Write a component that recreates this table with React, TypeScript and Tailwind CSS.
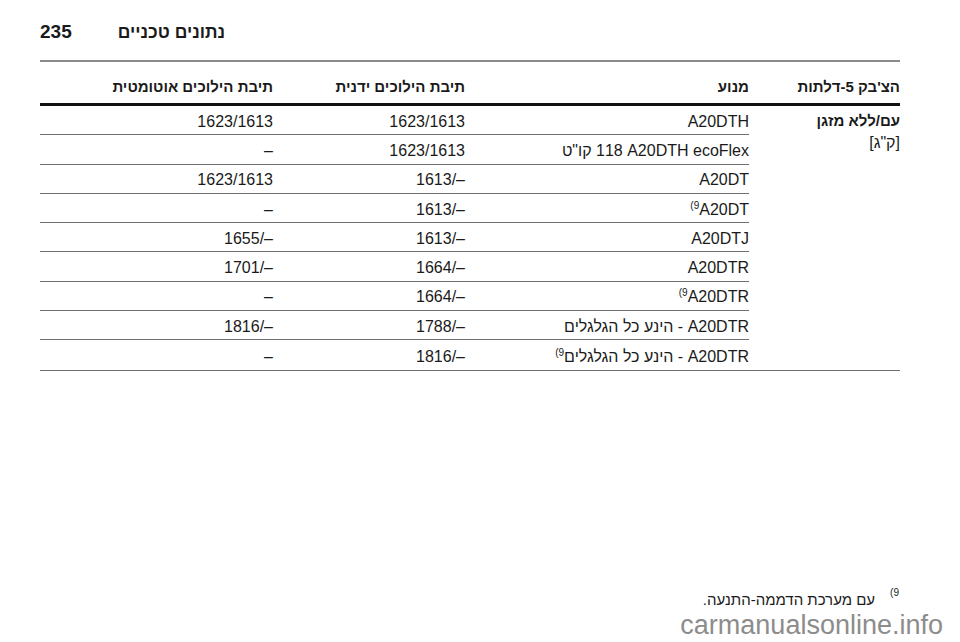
import React from "react";

type Row = {
  engine: React.ReactNode;
  manual: string;
  auto: string;
};

const Sup = ({ children }: { children: React.ReactNode }) => (
  <sup className="text-[10px] top-[-0.6em]">{children}</sup>
);

const rows: Row[] = [
  { engine: "A20DTH", manual: "1623/1613", auto: "1623/1613" },
  {
    engine: (
      <span dir="ltr">
        <span dir="rtl">קו"ט</span> 118 A20DTH ecoFlex
      </span>
    ),
    manual: "1623/1613",
    auto: "–",
  },
  { engine: "A20DT", manual: "1613/–", auto: "1623/1613" },
  {
    engine: (
      <span dir="ltr">
        <Sup>(9</Sup>A20DT
      </span>
    ),
    manual: "1613/–",
    auto: "–",
  },
  { engine: "A20DTJ", manual: "1613/–", auto: "1655/–" },
  { engine: "A20DTR", manual: "1664/–", auto: "1701/–" },
  {
    engine: (
      <span dir="ltr">
        <Sup>(9</Sup>A20DTR
      </span>
    ),
    manual: "1664/–",
    auto: "–",
  },
  { engine: "A20DTR - הינע כל הגלגלים", manual: "1788/–", auto: "1816/–" },
  {
    engine: (
      <>
        A20DTR - הינע כל הגלגלים<Sup>9)</Sup>
      </>
    ),
    manual: "1816/–",
    auto: "–",
  },
];

export default function App() {
  return (
    <div
      className="h-[642px] w-[960px] flex flex-col bg-white text-[#1a1a1a] overflow-hidden"
      style={{ fontFamily: '"Liberation Sans", Arial, sans-serif' }}
    >
      {/* page header */}
      <div className="flex items-center gap-[46px] pl-[40px] pt-[20px] h-[44px] font-bold leading-[24px]">
        <span className="text-[19px]">235</span>
        <span dir="rtl" className="text-[17.5px]">נתונים טכניים</span>
      </div>

      <div dir="rtl" className="ml-[40px] w-[860px] mt-[16px] border-t-2 border-[#8a8a8a]">
        {/* table head */}
        <div className="flex items-end h-[44px] pb-[6px] border-b-[3px] border-[#111] text-[15px] font-bold leading-[20px]">
          <div className="w-[151px]">הצ'בק 5-דלתות</div>
          <div className="w-[284px]">מנוע</div>
          <div className="w-[192px]">תיבת הילוכים ידנית</div>
          <div className="flex-1">תיבת הילוכים אוטומטית</div>
        </div>

        {/* body */}
        <div className="flex border-b border-[#6f6f6f] text-[16px]">
          <div className="w-[151px] pt-[4px] leading-[22px]">
            <div className="font-bold text-[15px]">עם/ללא מזגן</div>
            <div>[ק"ג]</div>
          </div>
          <div className="w-[709px]">
            {rows.map((r, i) => (
              <div
                key={i}
                className={
                  "flex items-center pt-[3px] h-[29.3px] leading-[20px] " +
                  (i < rows.length - 1 ? "border-b border-[#6f6f6f]" : "")
                }
              >
                <div className="w-[284px]">{r.engine}</div>
                <div className="w-[192px]">
                  <span dir="ltr">{r.manual}</span>
                </div>
                <div className="flex-1">
                  <span dir="ltr">{r.auto}</span>
                </div>
              </div>
            ))}
          </div>
        </div>
      </div>

      {/* footnote + watermark */}
      <div className="mt-auto pr-[61px] pb-[2px]">
        <div dir="rtl" className="flex items-start gap-[15px] text-[15px] leading-[20px]">
          <sup className="text-[10px] top-[0.3em]">9)</sup>
          <span>עם מערכת הדממה-התנעה.</span>
        </div>
        <div className="flex justify-end -mr-[44px] text-[27px] leading-[30px] text-[#8c8c8c]">
          carmanualsonline.info
        </div>
      </div>
    </div>
  );
}
